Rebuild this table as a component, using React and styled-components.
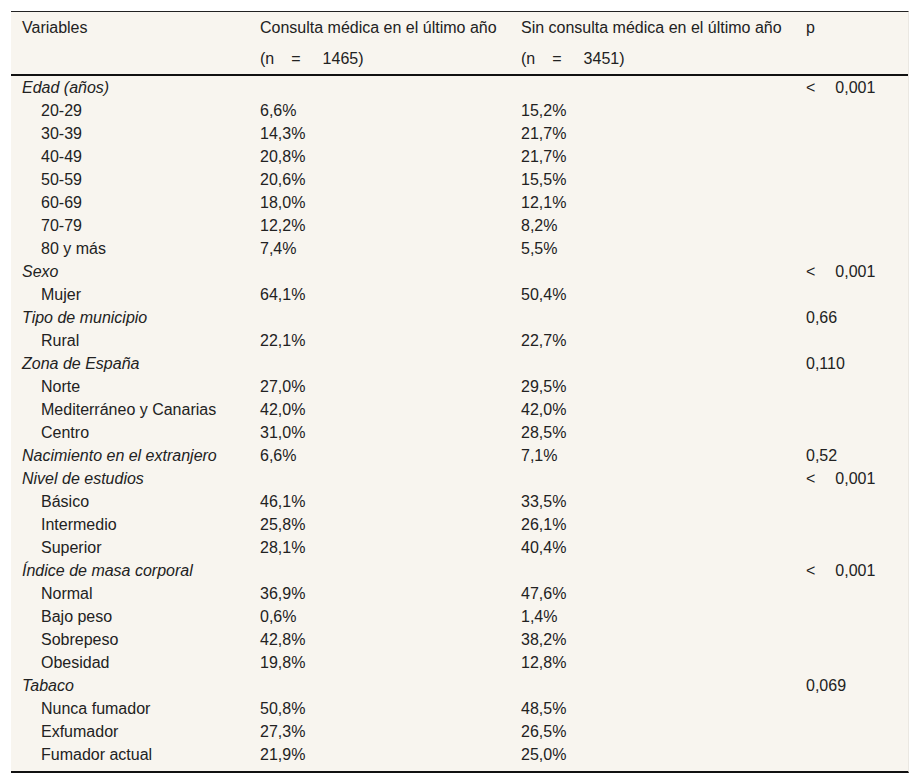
import React from 'react'
import styled, { createGlobalStyle } from 'styled-components'

const GlobalStyle = createGlobalStyle`
  body {
    margin: 0;
    background: #ffffff;
    font-family: "Liberation Sans", Arial, sans-serif;
    color: #222222;
  }
`

const Page = styled.div`
  padding: 11px 11px 0 11px;
`

const Table = styled.div`
  width: 897px;
  background: #f8f5ef;
  border-top: 1px solid #222;
  border-right: 1px solid #ebe8e2;
  border-bottom: 2px solid #111;
  padding-bottom: 5px;
  font-size: 16px;
`

const Row = styled.div`
  display: grid;
  grid-template-columns: 238px 261px 285px 1fr;
  height: ${props => (props.head ? '31px' : '23px')};
  align-items: center;
  ${props => props.divider && 'border-bottom: 2px solid #111;'}
`

const Cell = styled.div`
  padding-left: ${props => (props.indent ? '30px' : '11px')};
  font-style: ${props => (props.italic ? 'italic' : 'normal')};
  white-space: nowrap;
`

const Gap = styled.span`
  display: inline-block;
  width: ${props => props.w}px;
`

const NCount = ({ n }) => (
  <>
    (n<Gap w={17} />=<Gap w={22} />{n})
  </>
)

const Less = ({ v }) => (
  <>
    &lt;<Gap w={20} />{v}
  </>
)

const rows = [
  { label: 'Edad (años)', group: true, p: <Less v="0,001" /> },
  { label: '20-29', a: '6,6%', b: '15,2%' },
  { label: '30-39', a: '14,3%', b: '21,7%' },
  { label: '40-49', a: '20,8%', b: '21,7%' },
  { label: '50-59', a: '20,6%', b: '15,5%' },
  { label: '60-69', a: '18,0%', b: '12,1%' },
  { label: '70-79', a: '12,2%', b: '8,2%' },
  { label: '80 y más', a: '7,4%', b: '5,5%' },
  { label: 'Sexo', group: true, p: <Less v="0,001" /> },
  { label: 'Mujer', a: '64,1%', b: '50,4%' },
  { label: 'Tipo de municipio', group: true, p: '0,66' },
  { label: 'Rural', a: '22,1%', b: '22,7%' },
  { label: 'Zona de España', group: true, p: '0,110' },
  { label: 'Norte', a: '27,0%', b: '29,5%' },
  { label: 'Mediterráneo y Canarias', a: '42,0%', b: '42,0%' },
  { label: 'Centro', a: '31,0%', b: '28,5%' },
  { label: 'Nacimiento en el extranjero', group: true, a: '6,6%', b: '7,1%', p: '0,52' },
  { label: 'Nivel de estudios', group: true, p: <Less v="0,001" /> },
  { label: 'Básico', a: '46,1%', b: '33,5%' },
  { label: 'Intermedio', a: '25,8%', b: '26,1%' },
  { label: 'Superior', a: '28,1%', b: '40,4%' },
  { label: 'Índice de masa corporal', group: true, p: <Less v="0,001" /> },
  { label: 'Normal', a: '36,9%', b: '47,6%' },
  { label: 'Bajo peso', a: '0,6%', b: '1,4%' },
  { label: 'Sobrepeso', a: '42,8%', b: '38,2%' },
  { label: 'Obesidad', a: '19,8%', b: '12,8%' },
  { label: 'Tabaco', group: true, p: '0,069' },
  { label: 'Nunca fumador', a: '50,8%', b: '48,5%' },
  { label: 'Exfumador', a: '27,3%', b: '26,5%' },
  { label: 'Fumador actual', a: '21,9%', b: '25,0%' },
]

const App = () => (
  <>
    <GlobalStyle />
    <Page>
      <Table>
        <Row head>
          <Cell>Variables</Cell>
          <Cell>Consulta médica en el último año</Cell>
          <Cell>Sin consulta médica en el último año</Cell>
          <Cell>p</Cell>
        </Row>
        <Row head divider>
          <Cell />
          <Cell>
            <NCount n="1465" />
          </Cell>
          <Cell>
            <NCount n="3451" />
          </Cell>
          <Cell />
        </Row>
        {rows.map(r => (
          <Row key={r.label}>
            <Cell italic={r.group} indent={!r.group}>
              {r.label}
            </Cell>
            <Cell>{r.a}</Cell>
            <Cell>{r.b}</Cell>
            <Cell>{r.p}</Cell>
          </Row>
        ))}
      </Table>
    </Page>
  </>
)

export default App
